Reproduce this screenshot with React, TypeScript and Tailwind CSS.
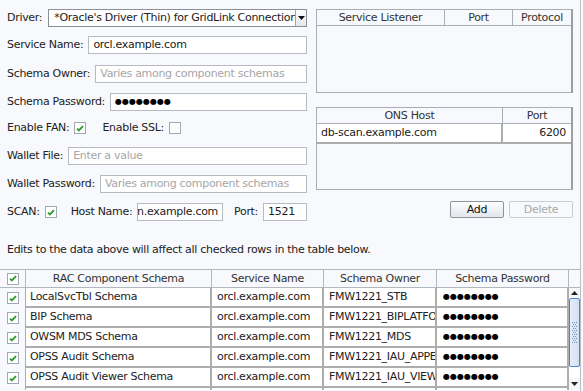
import type { ReactNode } from 'react';

const CheckBox = ({ checked = true }: { checked?: boolean }) => (
  <span className="flex h-[12px] w-[12px] shrink-0 items-center justify-center border border-[#a2a8b0] bg-white">
    {checked && (
      <svg width="8" height="7" viewBox="0 0 8 7">
        <path d="M1 3.6 2.9 5.5 7 1.2" fill="none" stroke="#2f9c2f" strokeWidth="1.9" />
      </svg>
    )}
  </span>
);

const TextField = ({
  children,
  muted,
  className = '',
}: {
  children: ReactNode;
  muted?: boolean;
  className?: string;
}) => (
  <div
    className={`flex h-[18px] min-w-0 items-center overflow-hidden whitespace-nowrap border border-[#b6bbc2] bg-white px-[4px] ${
      muted ? 'text-[#a6a6a6]' : ''
    } ${className}`}
  >
    {children}
  </div>
);

const Dots = () => <span className="text-[8px] tracking-[0px] text-black">●●●●●●●●</span>;

const Row = ({ label, className = '', children }: { label: string; className?: string; children: ReactNode }) => (
  <div className={`flex h-[18px] items-center gap-[5px] ${className}`}>
    <span className="shrink-0">{label}</span>
    {children}
  </div>
);

const schemas = [
  ['LocalSvcTbl Schema', 'FMW1221_STB'],
  ['BIP Schema', 'FMW1221_BIPLATFORM'],
  ['OWSM MDS Schema', 'FMW1221_MDS'],
  ['OPSS Audit Schema', 'FMW1221_IAU_APPEND'],
  ['OPSS Audit Viewer Schema', 'FMW1221_IAU_VIEWER'],
  ['OPSS Schema', 'FMW1221_OPSS'],
];

const Grip = () => (
  <svg width="5" height="21" viewBox="0 0 5 21">
    {Array.from({ length: 11 }).map((_, r) =>
      (r % 2 === 0 ? [0, 2, 4] : [1, 3]).map((x) => (
        <rect key={`${r}-${x}`} x={x} y={r * 2} width="1" height="1" fill="#6f93c9" />
      )),
    )}
  </svg>
);

const ScrollBar = () => (
  <div className="flex w-[11px] flex-col bg-[#f4f6f9]">
    <div className="flex h-[10px] items-center justify-center">
      <svg width="7" height="4" viewBox="0 0 7 4">
        <path d="M0 4h7L3.5 0z" fill="#222" />
      </svg>
    </div>
    <div className="flex h-[69px] items-center justify-center rounded-[2px] border border-[#4f82cf] bg-linear-to-r from-[#e8eef8] to-[#d3dff1]">
      <Grip />
    </div>
    <div className="flex-1 bg-white" />
    <div className="flex h-[12px] items-center justify-center">
      <svg width="7" height="4" viewBox="0 0 7 4">
        <path d="M0 0h7L3.5 4z" fill="#222" />
      </svg>
    </div>
  </div>
);

export default function App() {
  return (
    <div className="h-[391px] w-[583px] overflow-hidden bg-[#f7f9fc] font-['DejaVu_Sans',sans-serif] text-[11px] leading-[14px] tracking-[-0.3px] text-[#222]">
      <div className="flex h-full w-[581px] flex-col border-r border-[#b9bec5]">
        <div className="flex gap-[9px] pl-[7px] pt-[9px]">
          {/* connection form */}
          <div className="flex w-[300px] flex-col">
            <Row label="Driver:" className="gap-[6px]">
              <div className="flex h-[18px] min-w-0 flex-1 items-center border border-[#8b9098] bg-white">
                <span className="min-w-0 flex-1 overflow-hidden whitespace-nowrap pl-[5px]">
                  *Oracle's Driver (Thin) for GridLink Connections
                </span>
                <span className="flex h-full w-[11px] items-center justify-center border-l border-[#a0a5ad] bg-linear-to-b from-white to-[#e3e6eb]">
                  <svg width="7" height="4" viewBox="0 0 7 4">
                    <path d="M0 0h7L3.5 4z" fill="#111" />
                  </svg>
                </span>
              </div>
            </Row>
            <Row label="Service Name:" className="mt-[9px]">
              <TextField className="flex-1">orcl.example.com</TextField>
            </Row>
            <Row label="Schema Owner:" className="mt-[11px]">
              <TextField className="flex-1" muted>
                Varies among component schemas
              </TextField>
            </Row>
            <Row label="Schema Password:" className="mt-[10px]">
              <TextField className="flex-1">
                <Dots />
              </TextField>
            </Row>
            <Row label="Enable FAN:" className="mt-[8px]">
              <CheckBox />
              <span className="ml-[11px] shrink-0">Enable SSL:</span>
              <CheckBox checked={false} />
            </Row>
            <Row label="Wallet File:" className="mt-[10px]">
              <TextField className="flex-1" muted>
                Enter a value
              </TextField>
            </Row>
            <Row label="Wallet Password:" className="mt-[10px]">
              <TextField className="flex-1" muted>
                Varies among component schemas
              </TextField>
            </Row>
            <Row label="SCAN:" className="mt-[10px] gap-[4px]">
              <CheckBox />
              <span className="ml-[9px] shrink-0">Host Name:</span>
              <TextField className="w-[88px] justify-end">db-scan.example.com</TextField>
              <span className="ml-[6px] shrink-0">Port:</span>
              <TextField className="w-[45px]">1521</TextField>
            </Row>
          </div>

          {/* listeners */}
          <div className="flex w-[257px] flex-col">
            <div className="h-[84px] border border-r-2 border-[#a9aeb5] border-r-[#9a9ea5]">
              <div className="flex h-[16px] border-b border-[#a9aeb5] text-[#333]">
                <div className="flex w-[128px] items-center justify-center border-r border-[#a9aeb5]">Service Listener</div>
                <div className="flex w-[68px] items-center justify-center border-r border-[#a9aeb5]">Port</div>
                <div className="flex flex-1 items-center justify-center">Protocol</div>
              </div>
            </div>

            <div className="mt-[14px] h-[83px] border border-r-2 border-[#a9aeb5] border-r-[#9a9ea5]">
              <div className="flex h-[16px] border-b border-[#a9aeb5] text-[#333]">
                <div className="flex w-[186px] items-center justify-center border-r border-[#a9aeb5]">ONS Host</div>
                <div className="flex flex-1 items-center justify-center">Port</div>
              </div>
              <div className="flex h-[20px] border-b-2 border-[#adadad] bg-white">
                <div className="flex w-[186px] items-center border-r-2 border-[#adadad] pl-[4px]">db-scan.example.com</div>
                <div className="flex flex-1 items-center justify-end pr-[5px]">6200</div>
              </div>
            </div>

            <div className="mt-[11px] flex justify-end gap-[5px]">
              <button className="h-[17px] w-[54px] rounded-[2px] border border-[#8e949c] bg-linear-to-b from-white to-[#e2e5ea] leading-[14px] text-[#111]">
                Add
              </button>
              <button className="h-[17px] w-[64px] rounded-[2px] border border-[#c9cdd3] bg-[#f7f9fc] leading-[14px] text-[#a5a9ae]">
                Delete
              </button>
            </div>
          </div>
        </div>

        <p className="mt-[22px] pl-[7px]">Edits to the data above will affect all checked rows in the table below.</p>

        {/* component schemas */}
        <div className="mt-[12px]">
          <div className="grid h-[19px] grid-cols-[26px_186px_112px_113px_132px_11px] border-y border-[#b3b8bf] text-[#333]">
            <div className="flex items-center justify-center border-r border-[#b3b8bf]">
              <CheckBox />
            </div>
            <div className="flex items-center justify-center border-r border-[#b3b8bf]">RAC Component Schema</div>
            <div className="flex items-center justify-center border-r border-[#b3b8bf]">Service Name</div>
            <div className="flex items-center justify-center border-r border-[#b3b8bf]">Schema Owner</div>
            <div className="flex items-center justify-center border-r border-[#b3b8bf]">Schema Password</div>
            <div />
          </div>
          <div className="flex h-[102px] overflow-hidden">
            <div className="grid w-[569px] auto-rows-[20px] grid-cols-[26px_186px_112px_113px_132px] content-start">
              {schemas.map(([name, owner]) => (
                <div key={name} className="contents">
                  <div className="flex items-center justify-center border-r border-[#adadad]">
                    <CheckBox />
                  </div>
                  <div className="flex items-center overflow-hidden whitespace-nowrap border-b-2 border-r-2 border-[#adadad] bg-white px-[4px]">
                    {name}
                  </div>
                  <div className="flex items-center overflow-hidden whitespace-nowrap border-b-2 border-r-2 border-[#adadad] bg-white px-[5px]">
                    orcl.example.com
                  </div>
                  <div className="flex items-center overflow-hidden whitespace-nowrap border-b-2 border-r-2 border-[#adadad] bg-white px-[5px]">
                    {owner}
                  </div>
                  <div className="flex items-center overflow-hidden whitespace-nowrap border-b-2 border-r-2 border-[#adadad] bg-white px-[6px]">
                    <Dots />
                  </div>
                </div>
              ))}
            </div>
            <ScrollBar />
          </div>
        </div>
      </div>
    </div>
  );
}
